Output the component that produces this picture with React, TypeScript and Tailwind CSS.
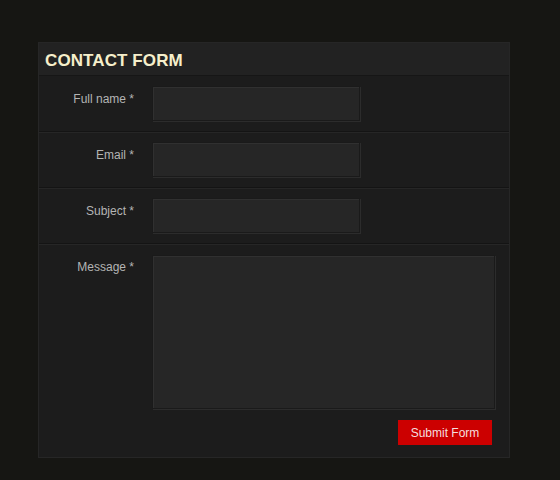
import React from "react";

const font = { fontFamily: '"Liberation Sans", Arial, sans-serif' };

function Row({ label, children, last }: { label: string; children: React.ReactNode; last?: boolean }) {
  return (
    <div className={`flex pt-[10px] pb-[10px] ${last ? "" : "border-b border-[#141414] shadow-[0_1px_0_#262626]"}`}>
      <div className="w-[95px] shrink-0 pt-[4px] text-right text-[12px] text-[#b4b4b4]">{label}</div>
      <div className="ml-[18px] flex-1">{children}</div>
    </div>
  );
}

export default function App() {
  const inputCls =
    "block w-[208px] h-[35px] bg-[#262626] border border-[#1a1a1a] shadow-[inset_1px_1px_0_#303030,1px_1px_0_#2c2c2c] outline-none";
  return (
    <div className="w-[560px] h-[480px] bg-[#161613] pt-[42px] pl-[38px]" style={font}>
      <div className="w-[472px] h-[416px] bg-[#1c1c1c] border border-[#262626] flex flex-col">
        <div className="h-[33px] bg-[#222222] border-b border-[#161616] flex items-center pl-[6px] pt-[4px]">
          <span className="text-[17px] font-bold text-[#f6efcb] tracking-[0.1px]">CONTACT FORM</span>
        </div>
        <Row label="Full name *">
          <input className={inputCls} />
        </Row>
        <Row label="Email *">
          <input className={inputCls} />
        </Row>
        <Row label="Subject *">
          <input className={inputCls} />
        </Row>
        <Row label="Message *" last>
          <textarea className="block mt-[1px] w-[343px] h-[154px] bg-[#262626] border border-[#1a1a1a] shadow-[inset_1px_1px_0_#303030,1px_1px_0_#2c2c2c] outline-none resize-none" />
          <div className="flex justify-end w-[340px] mt-[11px]">
            <button className="h-[25px] w-[94px] bg-[#cc0000] text-[12px] text-[#f5dede]">Submit Form</button>
          </div>
        </Row>
      </div>
    </div>
  );
}
